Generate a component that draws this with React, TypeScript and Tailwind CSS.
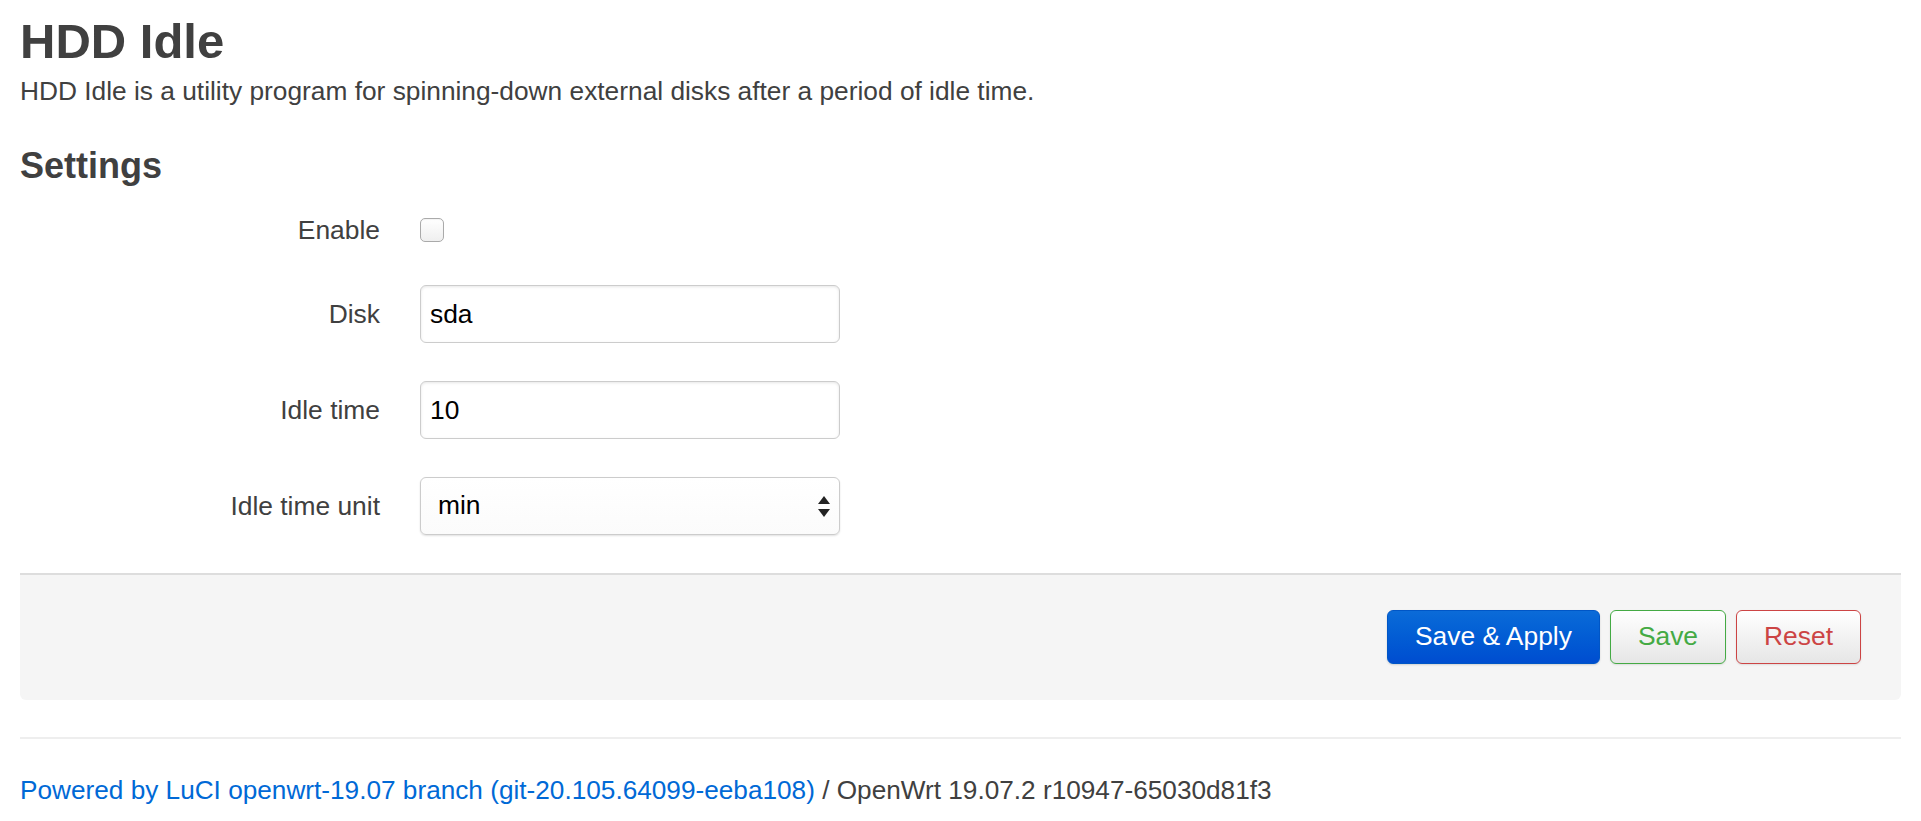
import React from 'react'

const FONT = "font-['Liberation_Sans',Helvetica,Arial,sans-serif]"

function Row({ label, children, className = '' }: { label: string; children: React.ReactNode; className?: string }) {
  return (
    <div className={`flex items-center ${className}`}>
      <label className="w-[360px] shrink-0 text-right text-[26.4px] leading-[30px]">{label}</label>
      <div className="ml-[40px] flex items-center">{children}</div>
    </div>
  )
}

export default function App() {
  return (
    <div className={`min-h-screen bg-white px-[20px] pt-[14px] text-[#404040] ${FONT}`}>
      {/* header */}
      <h2 className="mb-[5px] text-[49px] font-bold leading-[54px]">HDD Idle</h2>
      <div className="text-[26.3px] leading-[36px]">
        HDD Idle is a utility program for spinning-down external disks after a period of idle time.
      </div>

      <h3 className="mt-[37px] text-[36px] font-bold leading-[40px]">Settings</h3>

      {/* form */}
      <div className="mt-[29px]">
        <Row label="Enable" className="h-[30px]">
          <div className="h-[24px] w-[24px] rounded-[5px] border border-[#aaaaaa] bg-linear-to-b from-white to-[#efefef] shadow-[inset_0_1px_1px_rgba(0,0,0,0.05)]" />
        </Row>

        <Row label="Disk" className="mt-[40px] h-[58px]">
          <input
            readOnly
            value="sda"
            className={`h-[58px] w-[420px] rounded-[6px] border border-[#cccccc] bg-white px-[9px] text-[26.4px] text-black shadow-[inset_0_1px_3px_rgba(0,0,0,0.1)] outline-none ${FONT}`}
          />
        </Row>

        <Row label="Idle time" className="mt-[38px] h-[58px]">
          <input
            readOnly
            value="10"
            className={`h-[58px] w-[420px] rounded-[6px] border border-[#cccccc] bg-white px-[9px] text-[26.4px] text-black shadow-[inset_0_1px_3px_rgba(0,0,0,0.1)] outline-none ${FONT}`}
          />
        </Row>

        <Row label="Idle time unit" className="mt-[38px] h-[58px]">
          <div className="relative">
            <select
              defaultValue="min"
              className={`h-[58px] w-[420px] appearance-none rounded-[6px] border border-[#cccccc] bg-linear-to-b from-white to-[#fbfbfb] pl-[17px] text-[26.4px] text-black shadow-[0_1px_2px_rgba(0,0,0,0.12)] outline-none ${FONT}`}
            >
              <option value="s">s</option>
              <option value="min">min</option>
              <option value="h">h</option>
            </select>
            <svg
              className="pointer-events-none absolute right-[10px] top-[19px]"
              width="12"
              height="21"
              viewBox="0 0 12 21"
            >
              <polygon points="6,0 12,8 0,8" fill="#222" />
              <polygon points="0,13 12,13 6,21" fill="#222" />
            </svg>
          </div>
        </Row>
      </div>

      {/* page actions */}
      <div className="mt-[38px] flex justify-end gap-[10px] rounded-b-[6px] border-t-2 border-[#dddddd] bg-[#f5f5f5] pb-[36px] pr-[40px] pt-[35px]">
        <button className={`h-[54px] rounded-[6px] border border-[#0056c6] bg-linear-to-b from-[#0b6bd8] to-[#004dd0] px-[27px] text-[26.4px] text-white shadow-[0_1px_2px_rgba(0,0,0,0.15)] ${FONT}`}>
          Save &amp; Apply
        </button>
        <button className={`h-[54px] rounded-[6px] border border-[#44aa44] bg-linear-to-b from-white to-[#e6e6e6] px-[27px] text-[26.4px] text-[#44aa44] shadow-[0_1px_2px_rgba(0,0,0,0.1)] ${FONT}`}>
          Save
        </button>
        <button className={`h-[54px] rounded-[6px] border border-[#cc4444] bg-linear-to-b from-white to-[#e6e6e6] px-[27px] text-[26.4px] text-[#cc4444] shadow-[0_1px_2px_rgba(0,0,0,0.1)] ${FONT}`}>
          Reset
        </button>
      </div>

      {/* footer */}
      <div className="mt-[37px] border-t-2 border-[#eeeeee]" />
      <p className="mt-[33px] text-[26.2px] leading-[36px]">
        <a className="text-[#0069d6]">Powered by LuCI openwrt-19.07 branch (git-20.105.64099-eeba108)</a>
        {' / OpenWrt 19.07.2 r10947-65030d81f3'}
      </p>
    </div>
  )
}
